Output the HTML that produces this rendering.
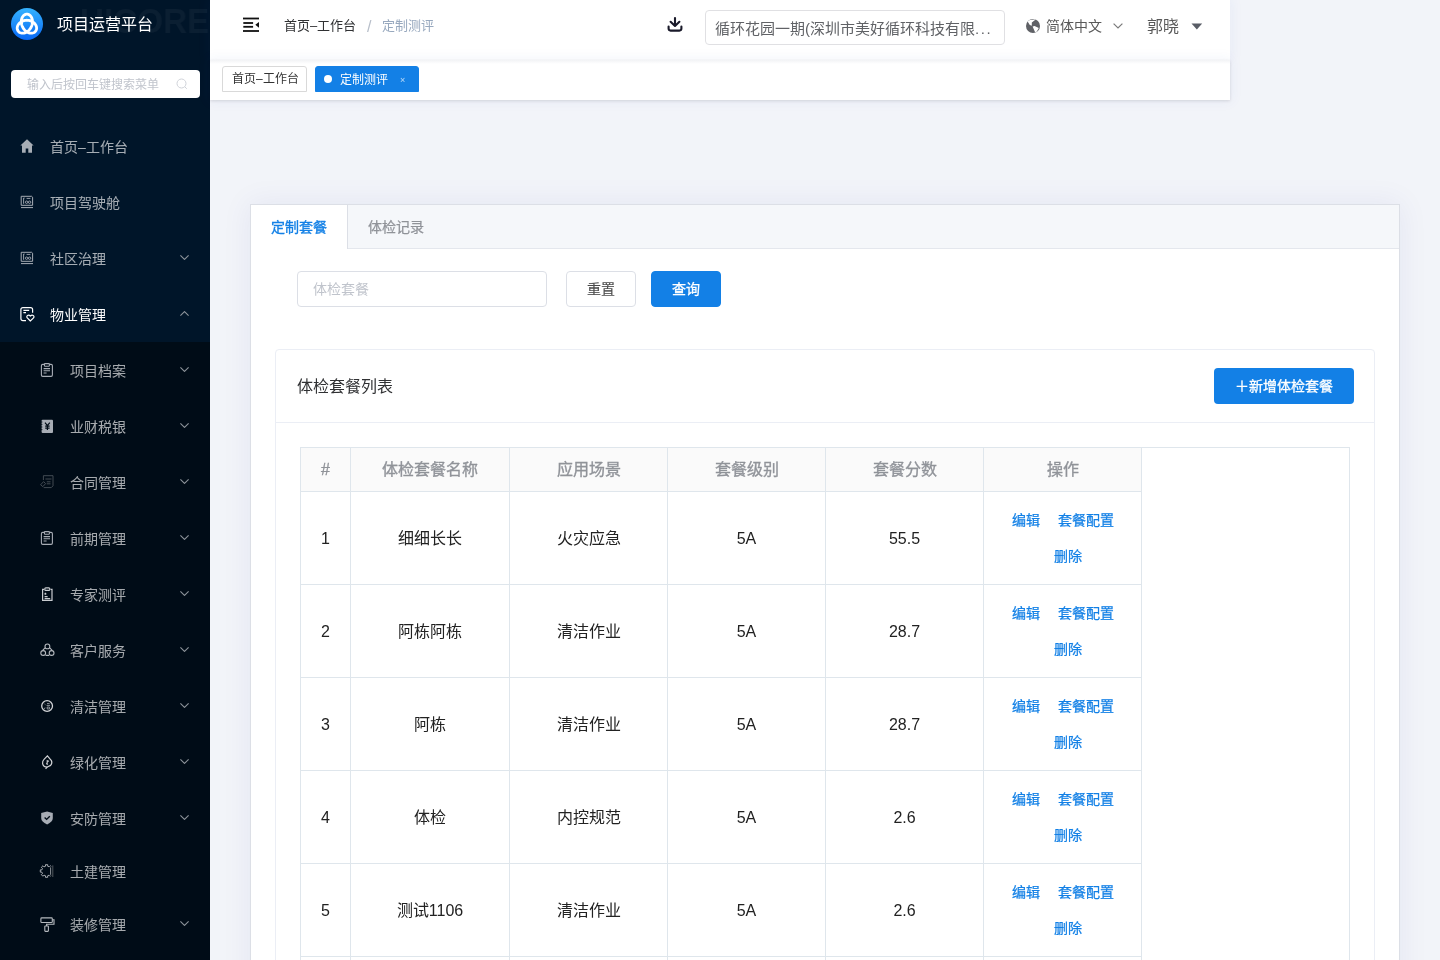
<!DOCTYPE html>
<html lang="zh-CN">
<head>
<meta charset="utf-8">
<style>
*{box-sizing:border-box;margin:0;padding:0}
html,body{width:1440px;height:960px;overflow:hidden}
body{position:relative;background:#f2f4f9;font-family:"Liberation Sans",sans-serif;color:#303133}
.a{position:absolute;white-space:nowrap}
svg.a{overflow:visible}
.a,.mt,.th,.td,.lk,.btn,.tag,.tabt,.inp span,.srch span,.wm{will-change:transform}
/* sidebar */
#side{position:absolute;left:0;top:0;width:210px;height:960px;background:#001529;overflow:hidden}
#sub{position:absolute;left:0;top:342px;width:210px;height:618px;background:#000c17}
.wm{position:absolute;left:80px;top:1px;font-size:35px;line-height:40px;font-weight:bold;color:rgba(255,255,255,.045);transform:scaleX(.95);transform-origin:0 0}
.ttl{left:57px;top:14px;font-size:16px;line-height:22px;color:#fff}
.srch{left:11px;top:70px;width:189px;height:28px;background:#fff;border-radius:4px}
.srch span{position:absolute;left:16px;top:7px;font-size:12px;line-height:16px;color:#c0c4cc}
.mt{position:absolute;left:50px;height:56px;line-height:56px;font-size:14px;color:rgba(255,255,255,.65);white-space:nowrap}
.mt.s{left:70px}
.mt.w{color:#fff}
.chev{position:absolute;left:179.5px;width:9px;height:5px}
/* header */
#hdr{position:absolute;left:210px;top:0;width:1020px;height:60px;background:#fff;box-shadow:0 0 12px 2px rgba(40,70,200,.05)}
#tagbar{position:absolute;left:210px;top:60px;width:1020px;height:40px;background:#fff;box-shadow:0 1px 3px 0 rgba(0,0,0,.12),0 0 12px 2px rgba(40,70,200,.05)}
#tagbar:before{content:"";position:absolute;left:0;top:0;width:100%;height:4px;background:linear-gradient(#f2f3f5,#fff)}
.bc{top:16px;font-size:13px;line-height:20px}
.tag{position:absolute;top:66px;height:26px;border:1px solid #d9d9d9;border-radius:3px 3px 0 0;background:#fff;font-size:12px;line-height:24px;color:#333;white-space:nowrap}
/* card */
#card{position:absolute;left:250px;top:204px;width:1150px;height:800px;background:#fff;border:1px solid #dcdfe6;box-shadow:0 0 28px 2px rgba(20,40,140,.06)}
#tabh{position:absolute;left:0;top:0;width:1148px;height:44px;background:#f5f7fa;border-bottom:1px solid #e4e7ed}
#tab1{position:absolute;left:0;top:0;width:97px;height:44px;background:#fff;border-right:1px solid #dcdfe6}
.tabt{position:absolute;top:0;line-height:44px;font-size:14px;white-space:nowrap}
.inp{position:absolute;left:297px;top:271px;width:250px;height:36px;border:1px solid #dcdfe6;border-radius:4px;background:#fff}
.inp span{position:absolute;left:15px;top:0;line-height:34px;font-size:14px;color:#c0c4cc;white-space:nowrap}
.btn{position:absolute;top:271px;width:70px;height:36px;border-radius:4px;font-size:14px;line-height:34px;text-align:center;white-space:nowrap;-webkit-text-stroke:0.3px currentColor}
#list{position:absolute;left:275px;top:349px;width:1100px;height:700px;background:#fff;border:1px solid #ebeef5;border-radius:4px}
#listh{position:absolute;left:0;top:0;width:1098px;height:73px;border-bottom:1px solid #ebeef5}
.hl{position:absolute;background:#dfe6ec}
.th{position:absolute;top:448px;height:44px;line-height:44px;text-align:center;font-size:16px;color:#909399;-webkit-text-stroke:0.35px #909399;white-space:nowrap}
.td{position:absolute;height:93px;line-height:93px;text-align:center;font-size:16px;color:#222;white-space:nowrap}
.lk{position:absolute;font-size:14px;color:#1380e6;-webkit-text-stroke:0.25px #1380e6;line-height:20px;white-space:nowrap;margin-top:1px}
</style>
</head>
<body>
<div id="side">
  <div id="sub"></div>
  <div class="wm">UICORE</div>
  <svg class="a" style="left:11px;top:8px" width="32" height="32" viewBox="0 0 32 32">
    <defs><linearGradient id="lg" x1="0" y1="0" x2="0" y2="1"><stop offset="0" stop-color="#35b3ff"/><stop offset="1" stop-color="#0868f5"/></linearGradient></defs>
    <circle cx="16" cy="16" r="16" fill="url(#lg)"/>
    <path d="M15.90 12.25 L16.84 12.29 L17.78 12.40 L18.70 12.60 L19.59 12.87 L20.44 13.21 L21.25 13.61 L22.01 14.08 L22.72 14.61 L23.35 15.18 L23.92 15.80 L24.41 16.46 L24.82 17.14 L25.14 17.85 L25.38 18.56 L25.54 19.28 L25.60 20.00 L25.58 20.69 L25.46 21.37 L25.26 22.01 L24.98 22.62 L24.63 23.17 L24.19 23.67 L23.69 24.11 L23.12 24.48 L22.50 24.78 L21.83 25.00 L21.12 25.14 L20.37 25.20 L19.60 25.17 L18.81 25.05 L18.02 24.85 L17.22 24.56 L16.44 24.19 L15.67 23.74 L14.93 23.20 L14.22 22.60 L13.55 21.93 L12.93 21.19 L12.37 20.40 L11.86 19.57 L11.42 18.69 L11.05 17.78 L10.75 16.86 L10.53 15.92 L10.38 14.97 L10.32 14.03 L10.32 13.11 L10.41 12.21 L10.57 11.35 L10.80 10.52 L11.09 9.75 L11.46 9.04 L11.87 8.39 L12.35 7.81 L12.87 7.32 L13.42 6.90 L14.01 6.58 L14.63 6.34 L15.26 6.20 L15.90 6.15 L16.54 6.20 L17.17 6.34 L17.79 6.58 L18.38 6.90 L18.93 7.32 L19.45 7.81 L19.93 8.39 L20.34 9.04 L20.71 9.75 L21.00 10.52 L21.23 11.35 L21.39 12.21 L21.48 13.11 L21.48 14.03 L21.42 14.97 L21.27 15.92 L21.05 16.86 L20.75 17.78 L20.38 18.69 L19.94 19.57 L19.43 20.40 L18.87 21.19 L18.25 21.93 L17.58 22.60 L16.87 23.20 L16.13 23.74 L15.36 24.19 L14.58 24.56 L13.78 24.85 L12.99 25.05 L12.20 25.17 L11.43 25.20 L10.68 25.14 L9.97 25.00 L9.30 24.78 L8.68 24.48 L8.11 24.11 L7.61 23.67 L7.17 23.17 L6.82 22.62 L6.54 22.01 L6.34 21.37 L6.22 20.69 L6.20 20.00 L6.26 19.28 L6.42 18.56 L6.66 17.85 L6.98 17.14 L7.39 16.46 L7.88 15.80 L8.45 15.18 L9.08 14.61 L9.79 14.08 L10.55 13.61 L11.36 13.21 L12.21 12.87 L13.10 12.60 L14.02 12.40 L14.96 12.29Z" fill="none" stroke="#fff" stroke-width="2.8" stroke-linejoin="round"/>
  </svg>
  <div class="a ttl">项目运营平台</div>
  <div class="a srch"><span>输入后按回车键搜索菜单</span>
    <svg class="a" style="left:165px;top:8px" width="12" height="12" viewBox="0 0 12 12"><circle cx="5.5" cy="5.5" r="4.5" fill="none" stroke="#cfd2d8" stroke-width="1"/><path d="M8.8 8.8 L10.8 10.8" stroke="#cfd2d8" stroke-width="1"/></svg>
  </div>

  <!-- menu -->
  <svg class="a" style="left:20px;top:139px" width="14" height="14" viewBox="0 0 14 14"><path d="M7 0.3 L0.4 6.6 H2 V13.7 H5.7 V9.4 H8.3 V13.7 H12 V6.6 H13.6 Z" fill="#a7adb5"/></svg>
  <div class="mt" style="top:119px">首页–工作台</div>

  <svg class="a" style="left:20px;top:195px" width="14" height="14" viewBox="0 0 14 14"><g fill="none" stroke="#a7adb5" stroke-width="1"><path d="M1.2 10.3 V1.3 H11.6 L12.6 2.2 V10.3 Z"/><path d="M1 12.6 H13"/><path d="M3.6 3 V8.8 M3.6 3 H4.6 M6.6 3.4 H10.4" stroke-width="0.9"/><circle cx="6.6" cy="7.2" r="1.2" stroke-width="0.9"/><circle cx="9.6" cy="7.2" r="1.2" stroke-width="0.9"/></g></svg>
  <div class="mt" style="top:175px">项目驾驶舱</div>

  <svg class="a" style="left:20px;top:251px" width="14" height="14" viewBox="0 0 14 14"><g fill="none" stroke="#a7adb5" stroke-width="1"><path d="M1.2 10.3 V1.3 H11.6 L12.6 2.2 V10.3 Z"/><path d="M1 12.6 H13"/><path d="M3.6 3 V8.8 M3.6 3 H4.6 M6.6 3.4 H10.4" stroke-width="0.9"/><circle cx="6.6" cy="7.2" r="1.2" stroke-width="0.9"/><circle cx="9.6" cy="7.2" r="1.2" stroke-width="0.9"/></g></svg>
  <div class="mt" style="top:231px">社区治理</div>
  <svg class="chev" style="top:255px" viewBox="0 0 9 5"><path d="M0.4 0.4 L4.5 4.4 L8.6 0.4" fill="none" stroke="#8c939a" stroke-width="1.1"/></svg>

  <svg class="a" style="left:20px;top:307px" width="15" height="15" viewBox="0 0 15 15"><g fill="none" stroke="#fff" stroke-width="1.2"><path d="M6 13.6 H3 Q0.9 13.6 0.9 11.5 V2.6 Q0.9 0.6 3 0.6 H10.5 Q12.6 0.6 12.6 2.6 V5.8"/><path d="M3.4 3.4 H9.2 M3.4 5.6 H6"/><path d="M10.4 14 L7.3 10.9 Q6.2 9.4 7.6 8.4 Q9 7.6 10.4 9 Q11.8 7.6 13.2 8.4 Q14.6 9.4 13.5 10.9 Z"/></g></svg>
  <div class="mt w" style="top:287px">物业管理</div>
  <svg class="chev" style="top:311px" viewBox="0 0 9 5"><path d="M0.4 4.6 L4.5 0.6 L8.6 4.6" fill="none" stroke="#8c939a" stroke-width="1.1"/></svg>

  <svg class="a" style="left:40px;top:363px" width="14" height="14" viewBox="0 0 14 14"><g fill="none" stroke="#a7adb5" stroke-width="1.1"><rect x="1.4" y="1.4" width="11" height="12" rx="1.3"/><rect x="4.4" y="0.6" width="5" height="2.6" rx="0.8" fill="#000c17"/><path d="M3.6 5.6 H10 M3.6 7.8 H10 M3.6 10 H6.6"/></g></svg>
  <div class="mt s" style="top:343px">项目档案</div>
  <svg class="chev" style="top:367px" viewBox="0 0 9 5"><path d="M0.4 0.4 L4.5 4.4 L8.6 0.4" fill="none" stroke="#8c939a" stroke-width="1.1"/></svg>

  <svg class="a" style="left:40px;top:419px" width="14" height="14" viewBox="0 0 14 14"><rect x="1.6" y="0.8" width="11.4" height="13.2" rx="1" fill="#a7adb5"/><path d="M1 3 H2.4 M1 5.4 H2.4 M1 8 H2.4 M1 10.6 H2.4" stroke="#000c17" stroke-width="0.8"/><g fill="none" stroke="#000c17" stroke-width="1.2"><path d="M5 3.6 L7.4 6.6 L9.8 3.6 M7.4 6.6 V11 M5.2 7.2 H9.6 M5.2 9.2 H9.6"/></g></svg>
  <div class="mt s" style="top:399px">业财税银</div>
  <svg class="chev" style="top:423px" viewBox="0 0 9 5"><path d="M0.4 0.4 L4.5 4.4 L8.6 0.4" fill="none" stroke="#8c939a" stroke-width="1.1"/></svg>

  <svg class="a" style="left:40px;top:475px" width="14" height="14" viewBox="0 0 14 14"><g fill="none" stroke="#4a525a" stroke-width="0.9"><path d="M3.4 5 V0.7 H13 V10.8 L11.3 12.6 H3.7"/><path d="M5.4 4 H11.5 M6.8 6.8 H10.5 M6.8 8.8 H10.5"/><path d="M0.6 9.8 L3.6 6.6 L5.6 8.6 L2.8 11.6 Z"/></g></svg>
  <div class="mt s" style="top:455px">合同管理</div>
  <svg class="chev" style="top:479px" viewBox="0 0 9 5"><path d="M0.4 0.4 L4.5 4.4 L8.6 0.4" fill="none" stroke="#8c939a" stroke-width="1.1"/></svg>

  <svg class="a" style="left:40px;top:531px" width="14" height="14" viewBox="0 0 14 14"><g fill="none" stroke="#a7adb5" stroke-width="1.1"><rect x="1.4" y="1.4" width="11" height="12" rx="1.3"/><rect x="4.4" y="0.6" width="5" height="2.6" rx="0.8" fill="#000c17"/><path d="M3.6 5.6 H10 M3.6 7.8 H10 M3.6 10 H6.6"/></g></svg>
  <div class="mt s" style="top:511px">前期管理</div>
  <svg class="chev" style="top:535px" viewBox="0 0 9 5"><path d="M0.4 0.4 L4.5 4.4 L8.6 0.4" fill="none" stroke="#8c939a" stroke-width="1.1"/></svg>

  <svg class="a" style="left:41px;top:587px" width="14" height="14" viewBox="0 0 14 14"><g fill="none" stroke="#c8ccd0" stroke-width="1.2"><path d="M3 2.4 H1.6 V13.4 H11 V2.4 H9.6"/><rect x="3.8" y="0.8" width="5" height="2.6" rx="1"/><path d="M4.4 5.8 V7.8 M3.4 6.8 H5.4 M3.6 9.6 H6.6 M3.6 11.6 H9.2"/></g></svg>
  <div class="mt s" style="top:567px">专家测评</div>
  <svg class="chev" style="top:591px" viewBox="0 0 9 5"><path d="M0.4 0.4 L4.5 4.4 L8.6 0.4" fill="none" stroke="#8c939a" stroke-width="1.1"/></svg>

  <svg class="a" style="left:40px;top:643px" width="15" height="14" viewBox="0 0 15 14"><g fill="none" stroke="#b4b9be" stroke-width="1.1"><circle cx="7.4" cy="3.4" r="2.4"/><circle cx="3.2" cy="10" r="2.4"/><circle cx="11.6" cy="10" r="2.4"/><path d="M5 4.8 L2.4 7.6 M9.8 4.8 L12.4 7.6 M5.6 12.4 H9.2"/></g></svg>
  <div class="mt s" style="top:623px">客户服务</div>
  <svg class="chev" style="top:647px" viewBox="0 0 9 5"><path d="M0.4 0.4 L4.5 4.4 L8.6 0.4" fill="none" stroke="#8c939a" stroke-width="1.1"/></svg>

  <svg class="a" style="left:40px;top:699px" width="14" height="14" viewBox="0 0 14 14"><circle cx="7.1" cy="7" r="5.4" fill="none" stroke="#d0d3d6" stroke-width="1.3"/><path d="M4.6 5 L5.4 5.6 M5 8.6 L4.4 10 M7 4.6 H9.6 M6.6 6.4 H10 M7.2 8 H9.4 V10 H7.2 Z" fill="none" stroke="#9aa0a6" stroke-width="0.9"/></svg>
  <div class="mt s" style="top:679px">清洁管理</div>
  <svg class="chev" style="top:703px" viewBox="0 0 9 5"><path d="M0.4 0.4 L4.5 4.4 L8.6 0.4" fill="none" stroke="#8c939a" stroke-width="1.1"/></svg>

  <svg class="a" style="left:40px;top:755px" width="14" height="15" viewBox="0 0 14 15"><path d="M7.4 0.8 L11.4 5.6 Q12.6 8.2 10.6 10.4 L7.4 12 Q3.4 12.2 2.6 8.6 Q2.4 6 3.8 4.6 Z" fill="none" stroke="#d0d3d6" stroke-width="1.2"/><path d="M7.2 5 V10 M7.2 7 L8.8 5.8 M6.2 8.2 L7.2 9" stroke="#c0c4c8" stroke-width="1.1"/><path d="M7.4 11.6 L5.6 14" stroke="#d0d3d6" stroke-width="1.2"/></svg>
  <div class="mt s" style="top:735px">绿化管理</div>
  <svg class="chev" style="top:759px" viewBox="0 0 9 5"><path d="M0.4 0.4 L4.5 4.4 L8.6 0.4" fill="none" stroke="#8c939a" stroke-width="1.1"/></svg>

  <svg class="a" style="left:40px;top:811px" width="14" height="14" viewBox="0 0 14 14"><path d="M7.1 0.4 L12.8 2 V7 Q12.8 11 7.1 13.4 Q1.2 11 1.2 7 V2 Z" fill="#a7adb5"/><path d="M4.6 6.6 L6.6 8.4 L9.8 5.2" fill="none" stroke="#000c17" stroke-width="1.4"/></svg>
  <div class="mt s" style="top:791px">安防管理</div>
  <svg class="chev" style="top:815px" viewBox="0 0 9 5"><path d="M0.4 0.4 L4.5 4.4 L8.6 0.4" fill="none" stroke="#8c939a" stroke-width="1.1"/></svg>

  <svg class="a" style="left:40px;top:864px" width="15" height="15" viewBox="0 0 15 15"><path d="M5.47 0.70 L7.73 0.70 L7.65 2.21 L9.24 2.87 L10.26 1.75 L11.85 3.34 L10.73 4.36 L11.39 5.95 L12.90 5.87 L12.90 8.13 L11.39 8.05 L10.73 9.64 L11.85 10.66 L10.26 12.25 L9.24 11.13 L7.65 11.79 L7.73 13.30 L5.47 13.30 L5.55 11.79 L3.96 11.13 L2.94 12.25 L1.35 10.66 L2.47 9.64 L1.81 8.05 L0.30 8.13 L0.30 5.87 L1.81 5.95 L2.47 4.36 L1.35 3.34 L2.94 1.75 L3.96 2.87 L5.55 2.21Z" fill="none" stroke="#a9aeb3" stroke-width="1"/><rect x="9.6" y="2.6" width="5" height="9" fill="#000c17"/><path d="M10.6 3.4 V10.8" stroke="#8d9399" stroke-width="1"/><path d="M12.8 1.4 V13" stroke="#5a6167" stroke-width="0.9"/></svg>
  <div class="mt s" style="top:844px">土建管理</div>

  <svg class="a" style="left:40px;top:917px" width="15" height="15" viewBox="0 0 15 15"><g fill="none" stroke="#b4b9be" stroke-width="1.1"><rect x="0.9" y="0.9" width="11.4" height="4.6" rx="0.8"/><path d="M12.3 2.8 H14 V7.2 H6.6 V9"/><rect x="4.8" y="9" width="3.6" height="5.4" rx="0.6"/></g></svg>
  <div class="mt s" style="top:897px">装修管理</div>
  <svg class="chev" style="top:921px" viewBox="0 0 9 5"><path d="M0.4 0.4 L4.5 4.4 L8.6 0.4" fill="none" stroke="#8c939a" stroke-width="1.1"/></svg>
</div>

<div id="hdr"></div>
<div id="tagbar"></div>
<!-- header content -->
<svg class="a" style="left:243px;top:17px" width="16" height="16" viewBox="0 0 16 16"><g fill="#111"><rect x="0" y="0.6" width="16" height="1.8"/><rect x="0.3" y="5.1" width="9.8" height="1.8"/><rect x="0.3" y="8.9" width="9.8" height="1.8"/><rect x="0" y="13.1" width="16" height="1.8"/><path d="M16 5 V10.7 L12.3 7.85 Z"/></g></svg>
<div class="a bc" style="left:284px;color:#303133">首页–工作台</div>
<div class="a" style="left:367px;top:17px;font-size:16px;line-height:20px;color:#b8bfca">/</div>
<div class="a bc" style="left:382px;color:#97a8be">定制测评</div>

<svg class="a" style="left:667px;top:17px" width="16" height="15" viewBox="0 0 16 15"><g fill="none" stroke="#1a1a2a" stroke-width="2.1" stroke-linecap="round" stroke-linejoin="round"><path d="M8 1 V8.6 M3.6 4.8 L8 8.9 L12.4 4.8"/><path d="M1.6 9.6 V11.6 Q1.6 13.6 3.6 13.6 H12.4 Q14.4 13.6 14.4 11.6 V9.6"/></g></svg>
<div class="a" style="left:705px;top:10px;width:300px;height:35px;border:1px solid #e0e0e3;border-radius:4px;background:#fff"></div>
<div class="a" style="left:715px;top:18px;font-size:15px;line-height:22px;color:#606266">循环花园一期(深圳市美好循环科技有限<span style="letter-spacing:1.6px">...</span></div>

<svg class="a" style="left:1026px;top:19px" width="14" height="14" viewBox="0 0 14 14"><circle cx="7" cy="7" r="7" fill="#5f6166"/><path d="M1.6 2.6 L3.8 1 L10 0.3 L5.8 3.6 V6.8 L3.8 6 Z M6.6 7.6 L8.6 7 L12.8 9 L10.8 12.6 L9.2 13.4 Z" fill="#fff"/></svg>
<div class="a" style="left:1046px;top:16px;font-size:14px;line-height:20px;color:#595959">简体中文</div>
<svg class="a" style="left:1113px;top:23px" width="10" height="6" viewBox="0 0 10 6"><path d="M0.6 0.6 L5 5 L9.4 0.6" fill="none" stroke="#7a7a7a" stroke-width="1.2"/></svg>
<div class="a" style="left:1147px;top:16px;font-size:16px;line-height:22px;color:#595959">郭晓</div>
<svg class="a" style="left:1191px;top:23px" width="12" height="7" viewBox="0 0 12 7"><path d="M0.5 0.4 H11.2 L5.85 6.4 Z" fill="#595d66"/></svg>

<div class="tag" style="left:222px;width:85px;padding-left:9px">首页–工作台</div>
<div class="tag" style="left:315px;width:104px;background:#1380e6;border-color:#1380e6;color:#fff">
  <span class="a" style="left:8px;top:8px;width:8px;height:8px;border-radius:50%;background:#fff"></span>
  <span class="a" style="left:24px;top:1px">定制测评</span>
  <span class="a" style="left:84px;top:1px;font-size:9px;color:rgba(255,255,255,.7)">×</span>
</div>

<div id="card">
  <div id="tabh"></div>
  <div id="tab1"></div>
  <div class="tabt" style="left:20px;color:#1380e6;-webkit-text-stroke:0.35px #1380e6">定制套餐</div>
  <div class="tabt" style="left:117px;color:#909399;-webkit-text-stroke:0.25px #909399">体检记录</div>
</div>
<div class="inp"><span>体检套餐</span></div>
<div class="btn" style="left:566px;border:1px solid #dcdfe6;background:#fff;color:#4a4a4a;-webkit-text-stroke:0.15px #4a4a4a">重置</div>
<div class="btn" style="left:651px;border:1px solid #1380e6;background:#1380e6;color:#fff">查询</div>

<div id="list"><div id="listh"></div></div>
<div class="a" style="left:297px;top:376px;font-size:16px;line-height:22px;color:#303133">体检套餐列表</div>
<div class="btn" style="left:1214px;top:368px;width:140px;background:#1380e6;color:#fff;line-height:36px">＋新增体检套餐</div>

<!-- table -->
<div class="a" style="left:300px;top:447px;width:842px;height:44px;background:#fafafa"></div>
<div class="a" style="left:300px;top:491px;width:1050px;height:469px;background:#fff"></div>
<div class="hl" style="left:300px;top:447px;width:1050px;height:1px"></div>
<div class="hl" style="left:300px;top:447px;width:1px;height:513px"></div>
<div class="hl" style="left:1349px;top:447px;width:1px;height:513px"></div>
<div class="hl" style="left:350px;top:447px;width:1px;height:513px"></div>
<div class="hl" style="left:509px;top:447px;width:1px;height:513px"></div>
<div class="hl" style="left:667px;top:447px;width:1px;height:513px"></div>
<div class="hl" style="left:825px;top:447px;width:1px;height:513px"></div>
<div class="hl" style="left:983px;top:447px;width:1px;height:513px"></div>
<div class="hl" style="left:1141px;top:447px;width:1px;height:513px"></div>
<div class="hl" style="left:300px;top:491px;width:842px;height:1px"></div>
<div class="hl" style="left:300px;top:584px;width:842px;height:1px"></div>
<div class="hl" style="left:300px;top:677px;width:842px;height:1px"></div>
<div class="hl" style="left:300px;top:770px;width:842px;height:1px"></div>
<div class="hl" style="left:300px;top:863px;width:842px;height:1px"></div>
<div class="hl" style="left:300px;top:956px;width:842px;height:1px"></div>

<div class="th" style="left:301px;width:49px">#</div>
<div class="th" style="left:351px;width:158px">体检套餐名称</div>
<div class="th" style="left:510px;width:157px">应用场景</div>
<div class="th" style="left:668px;width:157px">套餐级别</div>
<div class="th" style="left:826px;width:157px">套餐分数</div>
<div class="th" style="left:984px;width:157px">操作</div>
<div class="td" style="left:301px;top:492px;width:49px">1</div>
<div class="td" style="left:351px;top:492px;width:158px">细细长长</div>
<div class="td" style="left:510px;top:492px;width:157px">火灾应急</div>
<div class="td" style="left:668px;top:492px;width:157px">5A</div>
<div class="td" style="left:826px;top:492px;width:157px">55.5</div>
<div class="lk" style="left:1012px;top:509px">编辑</div>
<div class="lk" style="left:1058px;top:509px">套餐配置</div>
<div class="lk" style="left:1054px;top:545px">删除</div>
<div class="td" style="left:301px;top:585px;width:49px">2</div>
<div class="td" style="left:351px;top:585px;width:158px">阿栋阿栋</div>
<div class="td" style="left:510px;top:585px;width:157px">清洁作业</div>
<div class="td" style="left:668px;top:585px;width:157px">5A</div>
<div class="td" style="left:826px;top:585px;width:157px">28.7</div>
<div class="lk" style="left:1012px;top:602px">编辑</div>
<div class="lk" style="left:1058px;top:602px">套餐配置</div>
<div class="lk" style="left:1054px;top:638px">删除</div>
<div class="td" style="left:301px;top:678px;width:49px">3</div>
<div class="td" style="left:351px;top:678px;width:158px">阿栋</div>
<div class="td" style="left:510px;top:678px;width:157px">清洁作业</div>
<div class="td" style="left:668px;top:678px;width:157px">5A</div>
<div class="td" style="left:826px;top:678px;width:157px">28.7</div>
<div class="lk" style="left:1012px;top:695px">编辑</div>
<div class="lk" style="left:1058px;top:695px">套餐配置</div>
<div class="lk" style="left:1054px;top:731px">删除</div>
<div class="td" style="left:301px;top:771px;width:49px">4</div>
<div class="td" style="left:351px;top:771px;width:158px">体检</div>
<div class="td" style="left:510px;top:771px;width:157px">内控规范</div>
<div class="td" style="left:668px;top:771px;width:157px">5A</div>
<div class="td" style="left:826px;top:771px;width:157px">2.6</div>
<div class="lk" style="left:1012px;top:788px">编辑</div>
<div class="lk" style="left:1058px;top:788px">套餐配置</div>
<div class="lk" style="left:1054px;top:824px">删除</div>
<div class="td" style="left:301px;top:864px;width:49px">5</div>
<div class="td" style="left:351px;top:864px;width:158px">测试1106</div>
<div class="td" style="left:510px;top:864px;width:157px">清洁作业</div>
<div class="td" style="left:668px;top:864px;width:157px">5A</div>
<div class="td" style="left:826px;top:864px;width:157px">2.6</div>
<div class="lk" style="left:1012px;top:881px">编辑</div>
<div class="lk" style="left:1058px;top:881px">套餐配置</div>
<div class="lk" style="left:1054px;top:917px">删除</div>
</body>
</html>
